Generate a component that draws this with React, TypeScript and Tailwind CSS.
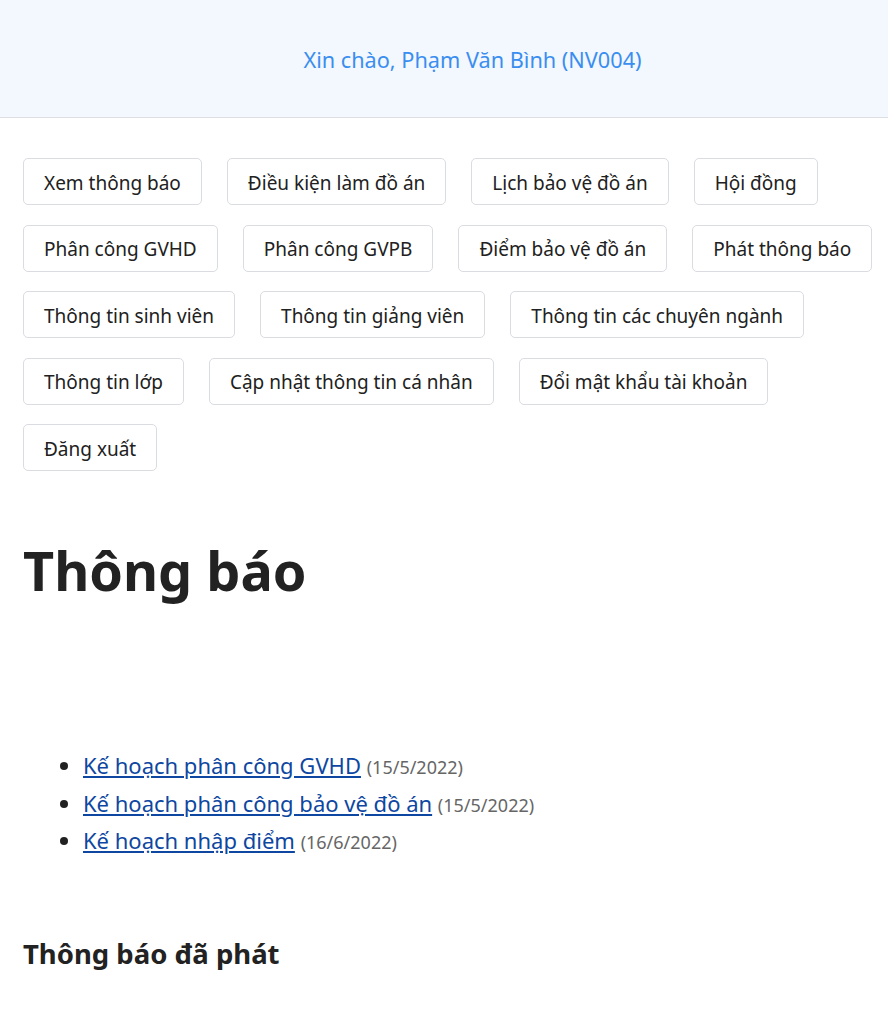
import React from "react";

const rows: string[][] = [
  ["Xem thông báo", "Điều kiện làm đồ án", "Lịch bảo vệ đồ án", "Hội đồng"],
  ["Phân công GVHD", "Phân công GVPB", "Điểm bảo vệ đồ án", "Phát thông báo"],
  ["Thông tin sinh viên", "Thông tin giảng viên", "Thông tin các chuyên ngành"],
  ["Thông tin lớp", "Cập nhật thông tin cá nhân", "Đổi mật khẩu tài khoản"],
  ["Đăng xuất"],
];

const items = [
  { t: "Kế hoạch phân công GVHD", d: "(15/5/2022)" },
  { t: "Kế hoạch phân công bảo vệ đồ án", d: "(15/5/2022)" },
  { t: "Kế hoạch nhập điểm", d: "(16/6/2022)" },
];

export default function App() {
  return (
    <div
      className="min-h-[1030px] bg-white text-[#212121]"
      style={{ fontFamily: '"Noto Sans", "Open Sans", sans-serif' }}
    >
      <header className="h-[118px] bg-[#f3f7fe] border-b border-[#dcdee3] flex items-center justify-center pl-[57px]">
        <span className="text-[21.7px] text-[#3a8ef0] leading-none pt-[2px]">Xin chào, Phạm Văn Bình (NV004)</span>
      </header>
      <nav className="pl-[23px] pt-[40px] flex flex-col gap-[19.5px]">
        {rows.map((r, i) => (
          <div key={i} className="flex gap-[25px]">
            {r.map((b) => (
              <button
                key={b}
                className="h-[47px] px-[20px] pt-[3px] border border-[#dadce2] rounded-[5px] bg-white text-[19px] text-[#212121] whitespace-nowrap"
              >
                {b}
              </button>
            ))}
          </div>
        ))}
      </nav>
      <h1 className="pl-[23px] mt-[72px] text-[54px] font-bold leading-none text-[#222]">Thông báo</h1>
      <ul className="mt-[150px] pl-[83px] list-disc flex flex-col">
        {items.map((it) => (
          <li key={it.t} className="text-[22px] leading-[37.5px] h-[37.5px]">
            <a href="#" className="text-[#0d47a1] underline">{it.t}</a>{" "}
            <span className="text-[18px] text-[#666]">{it.d}</span>
          </li>
        ))}
      </ul>
      <h2 className="pl-[23px] mt-[80px] text-[27.5px] font-bold leading-none text-[#222]">Thông báo đã phát</h2>
    </div>
  );
}
